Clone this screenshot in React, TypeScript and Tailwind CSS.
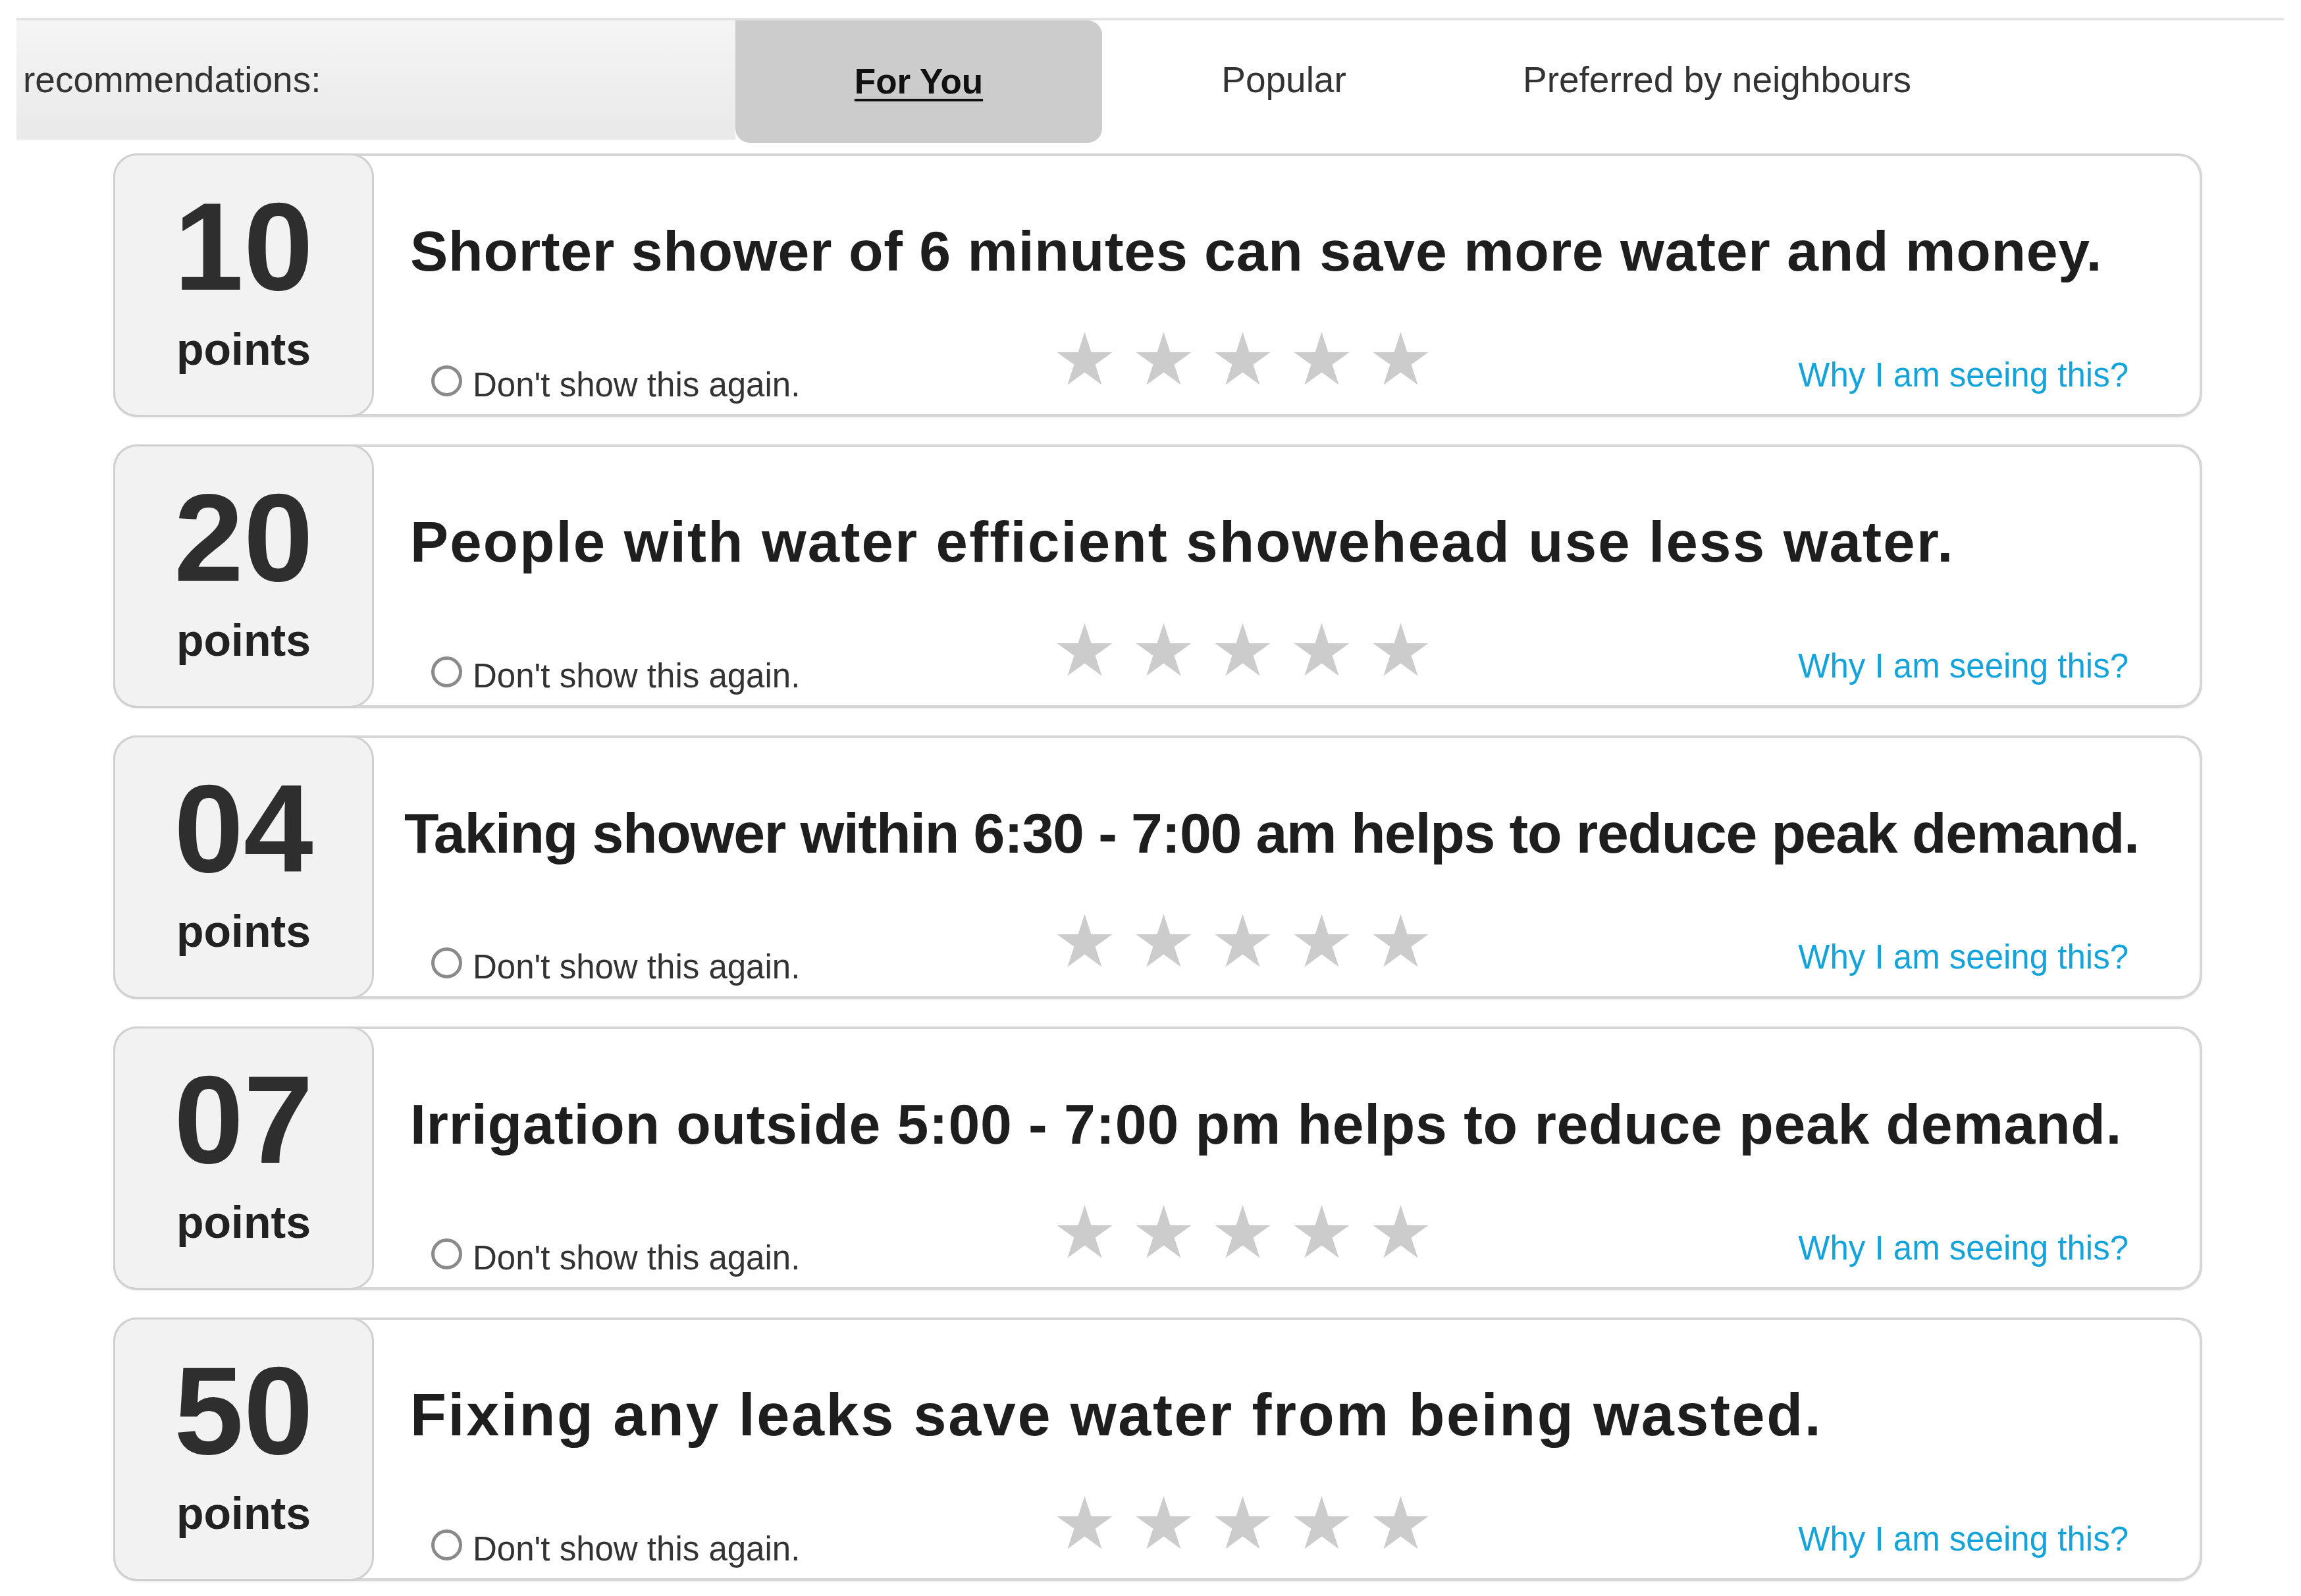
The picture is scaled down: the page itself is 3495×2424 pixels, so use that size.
import React from "react";

interface Tip {
  points: string;
  text: string;
  // per-tip title sizing, the original titles are not all set the same
  titleClass: string;
}

const tips: Tip[] = [
  {
    points: "10",
    text: "Shorter shower of 6 minutes can save more water and money.",
    titleClass: "text-[86px] tracking-[0.75px]",
  },
  {
    points: "20",
    text: "People with water efficient showehead use less water.",
    titleClass: "text-[87px] tracking-[2.2px]",
  },
  {
    points: "04",
    text: "Taking shower within 6:30 - 7:00 am helps to reduce peak demand.",
    titleClass: "text-[86px] tracking-[-1.3px] -ml-[9px]",
  },
  {
    points: "07",
    text: "Irrigation outside 5:00 - 7:00 pm helps to reduce peak demand.",
    titleClass: "text-[86px] tracking-[0.7px]",
  },
  {
    points: "50",
    text: "Fixing any leaks save water from being wasted.",
    titleClass: "text-[90px] tracking-[2.6px]",
  },
];

function Star() {
  return (
    <svg width="89" height="85" viewBox="0 0 100 96" className="shrink-0">
      <polygon
        fill="#cccccc"
        points="50,2.6 61.23,37.15 97.55,37.15 68.17,58.5 79.39,93.05 50,71.7 20.61,93.05 31.83,58.5 2.45,37.15 38.77,37.15"
      />
    </svg>
  );
}

function TipCard({ tip }: { tip: Tip }) {
  return (
    <div className="flex h-[400px] rounded-[36px] border-4 border-[#d6d6d6] bg-white shadow-[0_2px_2px_rgba(0,0,0,0.06)]">
      <div className="-my-[4px] -ml-[4px] flex w-[396px] shrink-0 flex-col items-center rounded-[36px] border-[3px] border-[#d0d0d0] bg-[#f2f2f2] pt-[43px]">
        <div className="text-[190px] font-bold leading-[190px] text-[#2e2e2e]">{tip.points}</div>
        <div className="mt-[27px] text-[68px] font-bold leading-[68px] text-[#222]">points</div>
      </div>
      <div className="flex min-w-0 flex-1 flex-col pl-[55px] pt-[94px]">
        <div className={`whitespace-nowrap font-bold leading-[100px] text-[#1e1e1e] ${tip.titleClass}`}>
          {tip.text}
        </div>
        <div className="mt-[69px] flex items-start pr-[108px]">
          <label className="ml-[32px] mt-[55px] flex w-[948px] shrink-0 items-start">
            <span className="h-[47px] w-[47px] shrink-0 rounded-full border-[5px] border-[#8a8a8a] bg-white" />
            <span className="ml-[16px] text-[51px] leading-[59px] text-[#333]">Don't show this again.</span>
          </label>
          <div className="mt-[2px] flex gap-[31px]">
            {[0, 1, 2, 3, 4].map((i) => (
              <Star key={i} />
            ))}
          </div>
          <a className="ml-auto mt-[40px] text-[51px] leading-[59px] text-[#14a4db]">Why I am seeing this?</a>
        </div>
      </div>
    </div>
  );
}

export default function App() {
  return (
    <div className="min-h-[2424px] w-[3495px] bg-white pt-[27px] font-['Liberation_Sans',Arial,sans-serif]">
      <div className="mx-[25px] flex h-[185px] w-[3444px] items-stretch border-t-4 border-[#e2e2e2]">
        <div className="flex w-[1092px] items-center bg-gradient-to-b from-[#f5f5f5] to-[#e9e9e9] pl-[10px] text-[55px] text-[#333]">
          recommendations:
        </div>
        <div className="-mb-[5px] flex w-[557px] items-center justify-center rounded-tr-[22px] rounded-b-[22px] bg-[#cccccc] text-[53px] font-bold text-[#111] underline decoration-[4px] underline-offset-[8px]">
          For You
        </div>
        <div className="flex w-[552px] items-center justify-center text-[55px] text-[#333]">Popular</div>
        <div className="flex w-[764px] items-center justify-center text-[55px] text-[#333]">
          Preferred by neighbours
        </div>
      </div>
      <div className="ml-[172px] mt-[21px] flex w-[3173px] flex-col gap-[42px]">
        {tips.map((t) => (
          <TipCard key={t.points} tip={t} />
        ))}
      </div>
    </div>
  );
}
